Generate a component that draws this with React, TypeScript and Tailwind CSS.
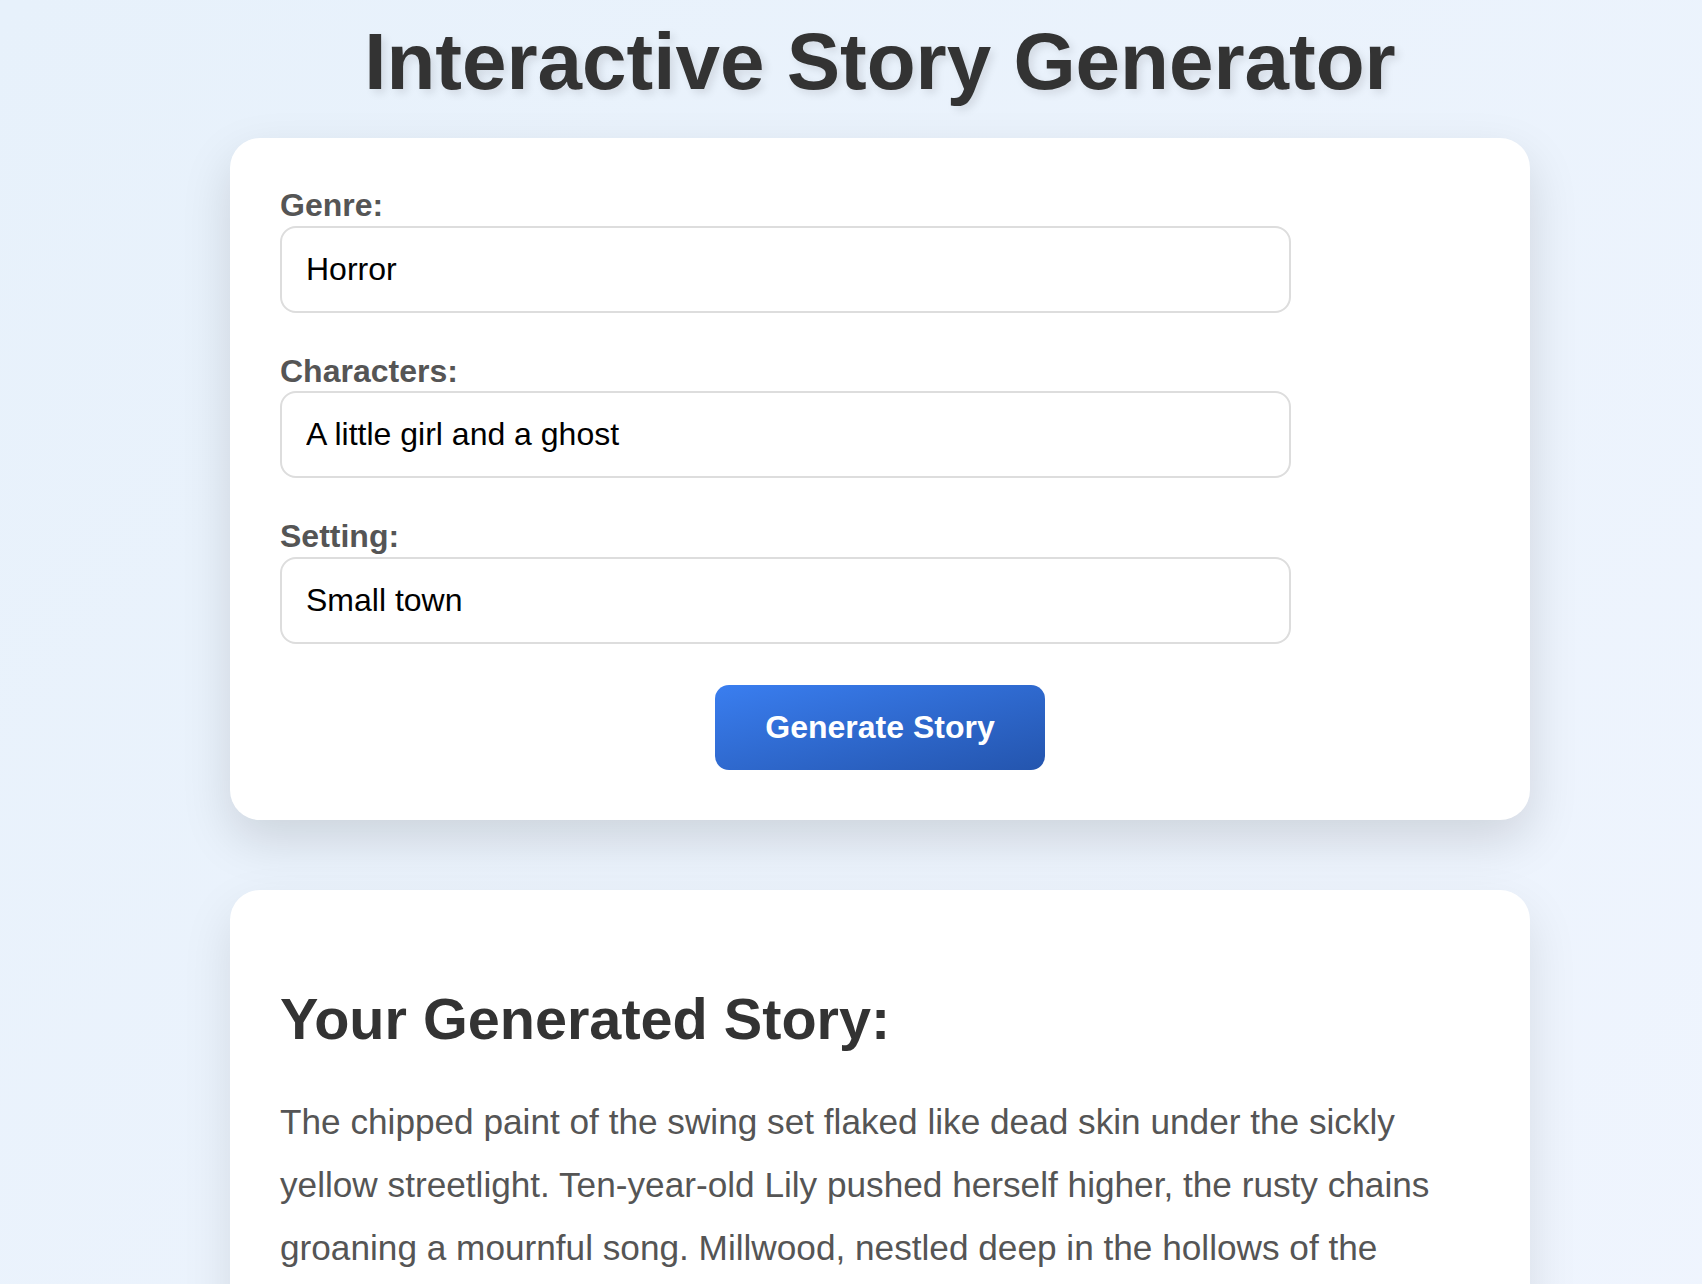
import React from "react";

const fields = [
  { label: "Genre:", value: "Horror" },
  { label: "Characters:", value: "A little girl and a ghost" },
  { label: "Setting:", value: "Small town" },
];

export default function App() {
  return (
    <div className="min-h-screen w-full bg-gradient-to-br from-[#e7f1fb] to-[#f0f5fe] font-['Liberation_Sans',Arial,Helvetica,sans-serif] overflow-hidden">
      <div className="ml-[230px] w-[1300px] pb-[80px]">
        <h1 className="mt-[16px] mb-[30px] text-center text-[80px] leading-[92px] font-bold text-[#333] [text-shadow:4px_4px_8px_rgba(0,0,0,0.1)]">
          Interactive Story Generator
        </h1>

        <div className="rounded-[30px] bg-white p-[50px] shadow-[0_20px_50px_rgba(0,0,0,0.13)]">
          {fields.map((f) => (
            <div key={f.label} className="mb-[41px]">
              <label className="block mb-[3px] text-[32px] leading-[34.5px] font-bold text-[#555]">
                {f.label}
              </label>
              <input
                type="text"
                readOnly
                value={f.value}
                className="block w-[1011px] h-[87px] rounded-[16px] border-2 border-[#ddd] bg-white px-[24px] text-[32px] text-black outline-none"
              />
            </div>
          ))}
          <div className="flex justify-center">
            <button className="h-[85px] w-[330px] rounded-[14px] bg-gradient-to-br from-[#3a7ef0] to-[#2455ae] text-[32px] font-bold text-white">
              Generate Story
            </button>
          </div>
        </div>

        <div className="mt-[70px] rounded-[30px] bg-white px-[50px] pt-[50px] pb-[50px] shadow-[0_20px_50px_rgba(0,0,0,0.1)]">
          <h2 className="mt-[47px] mb-[39px] text-[57.6px] leading-[64px] font-bold text-[#333]">
            Your Generated Story:
          </h2>
          <p className="text-[35.2px] leading-[63.4px] text-[#555]">
            The chipped paint of the swing set flaked like dead skin under the sickly yellow streetlight. Ten-year-old Lily pushed herself higher, the rusty chains groaning a mournful song. Millwood, nestled deep in the hollows of the Appalachian mountains, was the kind of town where everyone knew everyone, and the nights were always a little too quiet. Lily didn't mind the quiet. She had a friend who kept her company when the other children had gone home for supper.
          </p>
        </div>
      </div>
    </div>
  );
}
